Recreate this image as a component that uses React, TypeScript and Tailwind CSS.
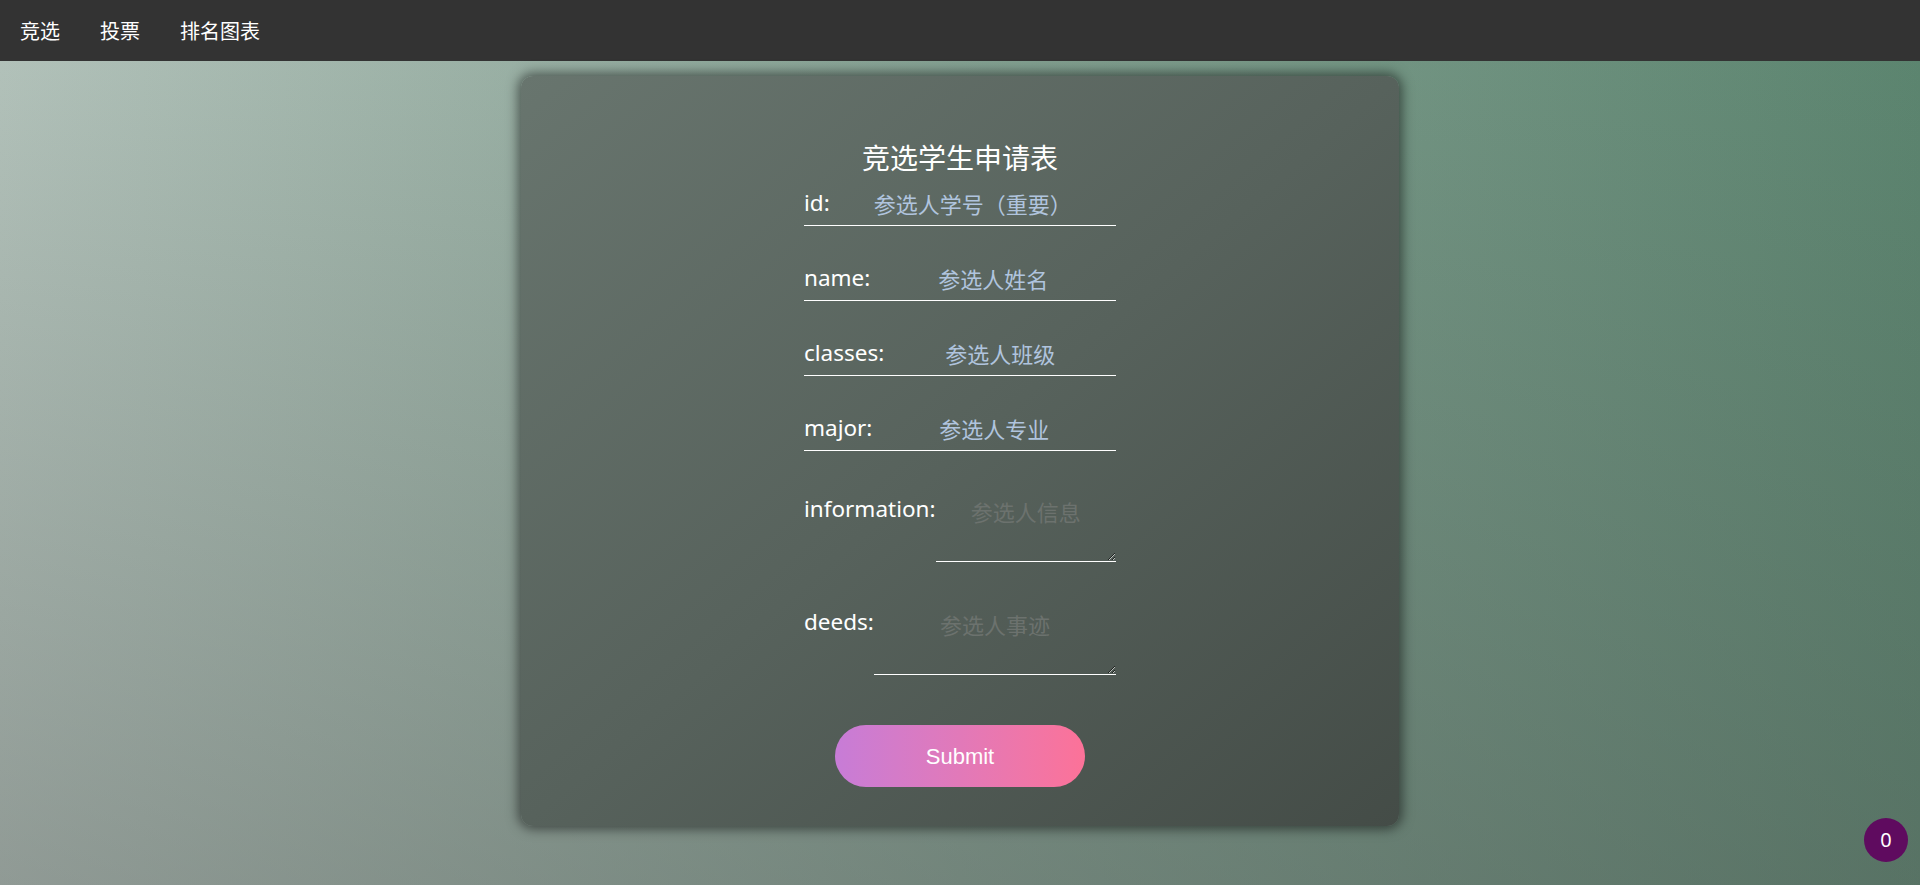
import React from "react";

const inputs = [
  { label: "id:", ph: "参选人学号（重要）" },
  { label: "name:", ph: "参选人姓名" },
  { label: "classes:", ph: "参选人班级" },
  { label: "major:", ph: "参选人专业" },
];

export default function App() {
  return (
    <div className="relative h-screen w-full overflow-hidden bg-[linear-gradient(to_bottom,rgba(80,80,80,0)_0%,rgba(80,80,80,0.36)_100%),linear-gradient(to_right,#b4c4bc_0%,#85a293_50%,#5c8670_100%)] font-['Noto_Sans_CJK_SC',sans-serif]">
      <nav className="flex h-[61px] items-center bg-[#333333]">
        {["竞选", "投票", "排名图表"].map((t) => (
          <a key={t} className="px-[20px] text-[20px] leading-[28px] text-white cursor-pointer">
            {t}
          </a>
        ))}
      </nav>

      <div className="flex justify-center pt-[15px]">
        <div className="flex h-[750px] w-[878px] flex-col items-center rounded-[12px] bg-linear-to-br from-[#68756e] via-[#57625c] to-[#444c47] pt-[63px] shadow-[0_0_12px_3px_rgba(0,0,0,0.5)]">
          <h1 className="text-[28px] leading-[36px] font-normal text-white">竞选学生申请表</h1>

          <div className="mt-[10px] flex w-[312px] flex-col">
            {inputs.map((f, i) => (
              <div
                key={f.label}
                className={`flex h-[41px] items-end border-b border-white pb-[6px] ${i === 0 ? "" : "mt-[34px]"}`}
              >
                <label className="font-['Noto_Sans',sans-serif] text-[22.5px] leading-[32px] text-white whitespace-nowrap">
                  {f.label}
                </label>
                <input
                  className="h-[32px] min-w-0 flex-1 bg-transparent text-center text-[22px] text-white outline-none placeholder:text-[#b0c4de] font-['Noto_Sans_CJK_SC',sans-serif]"
                  placeholder={f.ph}
                />
              </div>
            ))}

            <div className="mt-[42px] flex items-start">
              <label className="font-['Noto_Sans',sans-serif] text-[22.5px] leading-[32px] text-white whitespace-nowrap">
                information:
              </label>
              <textarea
                rows={2}
                className="h-[69px] min-w-0 flex-1 border-b border-white bg-transparent p-[2px] text-center text-[22px] leading-[32px] text-white outline-none placeholder:text-[#6c726e] font-['Noto_Sans_CJK_SC',sans-serif]"
                placeholder="参选人信息"
              />
            </div>

            <div className="mt-[44px] flex items-start">
              <label className="font-['Noto_Sans',sans-serif] text-[22.5px] leading-[32px] text-white whitespace-nowrap">
                deeds:
              </label>
              <textarea
                rows={2}
                className="h-[69px] min-w-0 flex-1 border-b border-white bg-transparent p-[2px] text-center text-[22px] leading-[32px] text-white outline-none placeholder:text-[#6c726e] font-['Noto_Sans_CJK_SC',sans-serif]"
                placeholder="参选人事迹"
              />
            </div>
          </div>

          <button className="mt-[50px] flex h-[62px] w-[250px] items-center justify-center rounded-full bg-linear-to-r from-[#c77cd7] to-[#fc7298] font-['Liberation_Sans',Arial,sans-serif] text-[22px] text-white">
            Submit
          </button>
        </div>
      </div>

      <div className="fixed right-[12px] bottom-[23px] flex h-[44px] w-[44px] items-center justify-center rounded-full bg-[#5f0b5f] font-['Noto_Sans',sans-serif] text-[20px] text-white">
        0
      </div>
    </div>
  );
}
